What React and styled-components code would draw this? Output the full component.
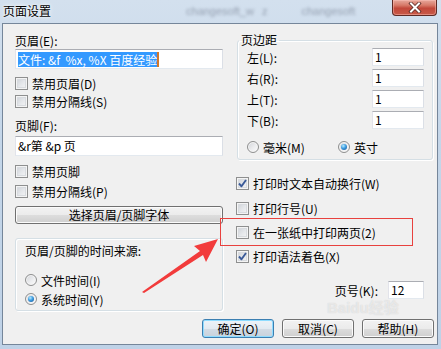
import React from 'react';
import styled, { createGlobalStyle } from 'styled-components';

const FONT = `"SimSun", "Noto Sans CJK SC", "Noto Sans", sans-serif`;

const Global = createGlobalStyle`
  html, body { margin: 0; padding: 0; }
  body { width: 441px; height: 349px; overflow: hidden; background: #c6d7ea; font-family: ${FONT}; }
  * { box-sizing: border-box; }
`;

const Window = styled.div`
  position: relative;
  width: 441px;
  height: 349px;
  display: flex;
  flex-direction: column;
  background: linear-gradient(180deg, #d3e0ee 0%, #c4d6e9 40%, #bfd2e7 100%);
  font-family: ${FONT};
  font-size: 12px;
  color: #000;
  overflow: hidden;
`;

const TitleBar = styled.div`
  height: 23px;
  display: flex;
  align-items: flex-start;
`;

const TitleText = styled.div`
  padding: 4px 0 0 3px;
  line-height: 14px;
  font-size: 12px;
  text-shadow: 0 0 5px rgba(255, 255, 255, 0.95), 0 0 2px rgba(255, 255, 255, 0.9);
`;

const BlurText = styled.div`
  margin-left: ${p => p.$ml}px;
  padding-top: 5px;
  font-family: "Liberation Sans", sans-serif;
  font-size: 11px;
  color: rgba(70, 80, 100, 0.45);
  filter: blur(1.4px);
`;

const CloseBtn = styled.div`
  margin-left: auto;
  margin-right: 4px;
  width: 45px;
  height: 16px;
  border: 1px solid #5e2a24;
  border-top: none;
  border-radius: 0 0 4px 4px;
  background: linear-gradient(180deg, #e7a89c 0%, #d77a69 35%, #c2483a 55%, #c85a48 100%);
  box-shadow: inset 0 0 0 1px rgba(255, 200, 190, 0.45);
  display: flex;
  align-items: center;
  justify-content: center;
`;

const Client = styled.div`
  flex: 1;
  margin: 0 3px 4px 2px;
  border: 1px solid #75869a;
  background: #f0f0f0;
  padding: 10px 4px 0 12px;
  display: flex;
  flex-direction: column;
`;

const Columns = styled.div`
  display: flex;
  gap: 13px;
`;

const Column = styled.div`
  width: ${p => p.$w}px;
  display: flex;
  flex-direction: column;
`;

const Label = styled.div`
  height: 14px;
  line-height: 14px;
  margin-top: ${p => p.$mt || 0}px;
  white-space: nowrap;
`;

const TextBox = styled.div`
  height: ${p => p.$h || 20}px;
  width: ${p => (p.$w ? `${p.$w}px` : 'auto')};
  margin-top: ${p => p.$mt || 0}px;
  border: 1px solid;
  border-color: #abadb3 #dbdfe6 #e3e9ef #e2e3ea;
  background: #fff;
  padding: 0 2px;
  display: flex;
  align-items: center;
  line-height: 14px;
  white-space: pre;
`;

const Selected = styled.span`
  background: #3399ff;
  color: #fff;
  line-height: 15px;
  white-space: pre;
`;

const Caret = styled.span`
  display: inline-block;
  width: 2px;
  height: 15px;
  background: #d2772a;
`;

const CheckRow = styled.div`
  display: flex;
  align-items: center;
  gap: 4px;
  height: 18px;
  margin-top: ${p => p.$mt || 0}px;
  white-space: nowrap;
`;

const Box = styled.span`
  width: 13px;
  height: 13px;
  flex: none;
  border: 1px solid #8e8f8f;
  background: linear-gradient(135deg, #cbcfd5 0%, #e6e8eb 55%, #f6f6f6 100%);
  box-shadow: inset 0 0 0 1px #f4f4f4, inset 0 0 0 2px #d8dbdf;
  display: flex;
  align-items: center;
  justify-content: center;
`;

const RadioDot = styled.span`
  width: 12px;
  height: 12px;
  flex: none;
  border-radius: 50%;
  border: 1px solid #8e8f8f;
  background: linear-gradient(135deg, #d2d4d8 0%, #eeeff1 60%, #fbfbfb 100%);
  box-shadow: inset 0 0 0 1px #f6f6f6;
  display: flex;
  align-items: center;
  justify-content: center;
  &::after {
    content: '';
    display: ${p => (p.$on ? 'block' : 'none')};
    width: 6px;
    height: 6px;
    border-radius: 50%;
    background: radial-gradient(circle at 38% 32%, #b7ecff 0%, #3c9be0 45%, #14508f 100%);
  }
`;

const RadioOption = styled.div`
  display: flex;
  align-items: center;
  gap: 4px;
  height: 18px;
  width: ${p => (p.$w ? `${p.$w}px` : 'auto')};
  margin-top: ${p => p.$mt || 0}px;
  white-space: nowrap;
`;

const WideButton = styled.div`
  height: 18px;
  margin-top: 6px;
  border: 1px solid #707070;
  border-radius: 3px;
  background: linear-gradient(180deg, #f2f2f2 0%, #ebebeb 50%, #dddddd 51%, #cfcfcf 100%);
  box-shadow: inset 0 0 0 1px #fbfbfb;
  display: flex;
  align-items: center;
  justify-content: center;
  line-height: 14px;
`;

const TimeGroup = styled.div`
  margin-top: 14px;
  border: 1px solid #d5dfe5;
  border-radius: 3px;
  box-shadow: inset 1px 1px 0 #fff, 1px 1px 0 #fff;
  padding: 5px 8px 2px 9px;
  display: flex;
  flex-direction: column;
`;

const Fieldset = styled.fieldset`
  margin: -1px 0 0 1px;
  padding: 1px 8px 3px 9px;
  border: 1px solid #d5dfe5;
  border-radius: 3px;
  box-shadow: inset 1px 1px 0 #fff, 1px 1px 0 #fff;
  min-width: 0;
`;

const Legend = styled.legend`
  margin-left: -8px;
  padding: 0 2px;
  line-height: 14px;
  font-size: 12px;
`;

const MarginRow = styled.div`
  display: flex;
  align-items: center;
  justify-content: space-between;
  height: 18px;
  margin-top: ${p => p.$mt || 0}px;
`;

const RadioRow = styled.div`
  display: flex;
  align-items: center;
  margin-top: 9px;
`;

const PageRow = styled.div`
  display: flex;
  align-items: center;
  justify-content: flex-end;
  gap: 10px;
  margin-top: 16px;
  padding-right: 9px;
`;

const ButtonRow = styled.div`
  display: flex;
  justify-content: flex-end;
  gap: 8px;
  margin: 8px -1px 0 0;
`;

const DlgButton = styled.div`
  width: 72px;
  height: 19px;
  border: 1px solid ${p => (p.$primary ? '#3c7fb1' : '#707070')};
  border-radius: 3px;
  background: ${p =>
    p.$primary
      ? 'linear-gradient(180deg, #edf3f8 0%, #e3eaf1 50%, #d3dce5 51%, #c8d2dc 100%)'
      : 'linear-gradient(180deg, #f2f2f2 0%, #ebebeb 50%, #dddddd 51%, #cfcfcf 100%)'};
  box-shadow: inset 0 0 0 1px ${p => (p.$primary ? '#8fdcff' : '#fbfbfb')};
  display: flex;
  align-items: center;
  justify-content: center;
  line-height: 14px;
`;

const RedBox = styled.div`
  position: absolute;
  left: 220px;
  top: 218px;
  width: 193px;
  height: 28px;
  border: 1px solid #e8413e;
  pointer-events: none;
`;

const Overlay = styled.svg`
  position: absolute;
  left: 0;
  top: 0;
  pointer-events: none;
`;

const Watermark = styled.div`
  position: absolute;
  left: 327px;
  top: 300px;
  line-height: 16px;
  font-family: "Liberation Sans", "Noto Sans CJK SC", sans-serif;
  font-weight: bold;
  font-size: 15px;
  color: rgba(255, 255, 255, 0.5);
  text-shadow: 0 0 1px rgba(160, 160, 160, 0.45);
  pointer-events: none;
`;

const Check = ({ on }) => (
  <Box>
    {on && (
      <svg width="11" height="11" viewBox="0 0 11 11">
        <path d="M2 5.5 L4.5 8.3 L9 2" fill="none" stroke="#3a5a98" strokeWidth="1.9" strokeLinejoin="round" />
      </svg>
    )}
  </Box>
);

const CheckItem = ({ on, mt, children }) => (
  <CheckRow $mt={mt}>
    <Check on={on} />
    <span>{children}</span>
  </CheckRow>
);

const Radio = ({ on, w, mt, children }) => (
  <RadioOption $w={w} $mt={mt}>
    <RadioDot $on={on} />
    <span>{children}</span>
  </RadioOption>
);

export default function App() {
  return (
    <>
      <Global />
      <Window>
        <TitleBar>
          <TitleText>页面设置</TitleText>
          <BlurText $ml={135}>changesoft_w</BlurText>
          <BlurText $ml={8}>z</BlurText>
          <BlurText $ml={34}>changesoft</BlurText>
          <CloseBtn>
            <svg width="14" height="11" viewBox="0 0 14 11">
              <path d="M3 1.5 L11 9.5 M11 1.5 L3 9.5" stroke="#5a2a25" strokeWidth="3.6" strokeLinecap="square" />
              <path d="M3 1.5 L11 9.5 M11 1.5 L3 9.5" stroke="#ffffff" strokeWidth="2" strokeLinecap="square" />
            </svg>
          </CloseBtn>
        </TitleBar>
        <Client>
          <Columns>
            <Column $w={208}>
              <Label>页眉(E):</Label>
              <TextBox $mt={1}>
                <Selected>{'文件: &f  %x, %X 百度经验'}</Selected>
                <Caret />
              </TextBox>
              <CheckItem mt={5}>禁用页眉(D)</CheckItem>
              <CheckItem>禁用分隔线(S)</CheckItem>
              <Label $mt={9}>页脚(F):</Label>
              <TextBox $mt={3}>{'&r第 &p 页'}</TextBox>
              <CheckItem mt={6}>禁用页脚</CheckItem>
              <CheckItem mt={2}>禁用分隔线(P)</CheckItem>
              <WideButton>选择页眉/页脚字体</WideButton>
              <TimeGroup>
                <Label>页眉/页脚的时间来源:</Label>
                <Radio mt={13}>文件时间(I)</Radio>
                <Radio on mt={1}>系统时间(Y)</Radio>
              </TimeGroup>
            </Column>
            <Column $w={197}>
              <Fieldset>
                <Legend>页边距</Legend>
                {['左(L):', '右(R):', '上(T):', '下(B):'].map((t, i) => (
                  <MarginRow key={t} $mt={i ? 3 : 0}>
                    <span>{t}</span>
                    <TextBox $w={52} $h={18}>1</TextBox>
                  </MarginRow>
                ))}
                <RadioRow>
                  <Radio w={91}>毫米(M)</Radio>
                  <Radio on>英寸</Radio>
                </RadioRow>
              </Fieldset>
              <CheckItem on mt={14}>打印时文本自动换行(W)</CheckItem>
              <CheckItem mt={7}>打印行号(U)</CheckItem>
              <CheckItem mt={6}>在一张纸中打印两页(2)</CheckItem>
              <CheckItem on mt={6}>打印语法着色(X)</CheckItem>
              <PageRow>
                <span>页号(K):</span>
                <TextBox $w={36} $h={18}>12</TextBox>
              </PageRow>
            </Column>
          </Columns>
          <ButtonRow>
            <DlgButton $primary>确定(O)</DlgButton>
            <DlgButton>取消(C)</DlgButton>
            <DlgButton>帮助(H)</DlgButton>
          </ButtonRow>
        </Client>
        <Watermark>Baidu经验</Watermark>
        <RedBox />
        <Overlay width="441" height="349" viewBox="0 0 441 349">
          <polygon
            points="218,239 194,246 200,251 142,292 144,293 203,255 206,262"
            fill="#f23b3b"
          />
        </Overlay>
      </Window>
    </>
  );
}
